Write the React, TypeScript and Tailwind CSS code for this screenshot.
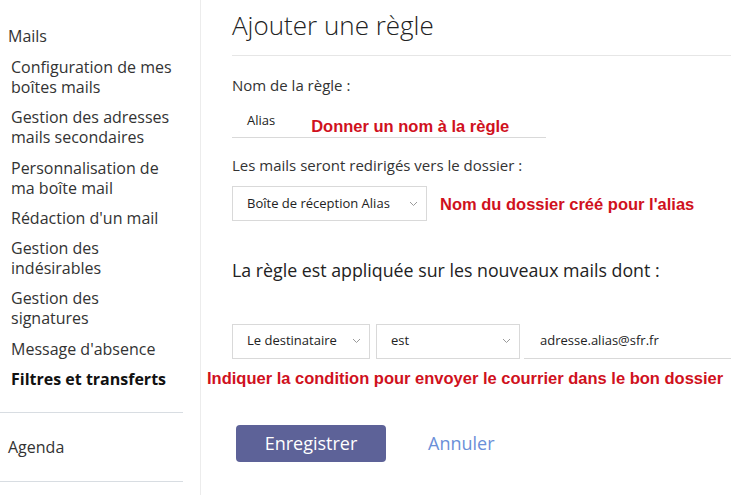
import React from "react";

const sidebarItems = [
  "Configuration de mes boîtes mails",
  "Gestion des adresses mails secondaires",
  "Personnalisation de ma boîte mail",
  "Rédaction d'un mail",
  "Gestion des indésirables",
  "Gestion des signatures",
  "Message d'absence",
];

const annotation = { fontFamily: "'Liberation Sans', Arial, sans-serif" };

function Chevron() {
  return (
    <svg width="9" height="6" viewBox="0 0 9 6" fill="none" className="shrink-0">
      <path d="M1 1l3.5 3.5L8 1" stroke="#9a9a9a" strokeWidth="1" />
    </svg>
  );
}

function Select({ label, width }: { label: string; width: string }) {
  return (
    <div
      className={`${width} h-[35px] border border-[#d9d9d9] bg-white flex items-center justify-between pl-[14px] pr-[8px] text-[13px] text-[#222]`}
    >
      <span>{label}</span>
      <Chevron />
    </div>
  );
}

export default function App() {
  return (
    <div
      className="flex w-[731px] h-[495px] bg-white overflow-hidden text-[#333]"
      style={{ fontFamily: "'Open Sans', 'Noto Sans', sans-serif" }}
    >
      {/* Sidebar */}
      <aside className="w-[201px] shrink-0 border-r border-[#ececec] flex flex-col">
        <div className="w-[183px] pt-[25px]">
          <div className="pl-[8px] text-[16px] leading-[22px] text-[#333]">Mails</div>
          <ul className="pl-[11px] pt-[10px] flex flex-col gap-[10.3px] text-[16px] leading-[20px] text-[#333]">
            {sidebarItems.map((item) => (
              <li key={item} className="w-[164px]">
                {item}
              </li>
            ))}
            <li className="font-bold text-[#111] whitespace-nowrap">Filtres et transferts</li>
          </ul>
          <div className="mt-[23px] border-t border-[#d8dde2]" />
          <div className="pl-[8px] h-[68px] flex items-center text-[16px] text-[#333]">Agenda</div>
          <div className="border-t border-[#d8dde2]" />
        </div>
      </aside>

      {/* Main */}
      <main className="flex-1 pl-[31px]">
        <h1 className="pt-[9px] text-[26px] leading-[32px] font-light text-[#222]">Ajouter une règle</h1>
        <div className="mt-[14px] border-t border-[#e6e6e6]" />

        <p className="mt-[20px] text-[15px] leading-[18px] text-[#333]">Nom de la règle :</p>
        <div className="mt-[10px] w-[314px] h-[34px] border-b border-[#d9d9d9] flex items-center">
          <span className="pl-[15px] text-[13px] text-[#222]">Alias</span>
          <span className="ml-[36px] mt-[12px] text-[16.5px] font-bold text-[#d0111d]" style={annotation}>
            Donner un nom à la règle
          </span>
        </div>

        <p className="mt-[18px] text-[15px] leading-[18px] text-[#333]">
          Les mails seront redirigés vers le dossier :
        </p>
        <div className="mt-[12px] flex items-center gap-[13px]">
          <Select label="Boîte de réception Alias" width="w-[195px]" />
          <span className="mt-[2px] text-[16.5px] font-bold text-[#d0111d]" style={annotation}>
            Nom du dossier créé pour l'alias
          </span>
        </div>

        <p className="mt-[38px] text-[17.8px] leading-[22px] text-[#222]">
          La règle est appliquée sur les nouveaux mails dont :
        </p>

        <div className="mt-[42px] flex items-center">
          <Select label="Le destinataire" width="w-[138px]" />
          <div className="ml-[6px]">
            <Select label="est" width="w-[144px]" />
          </div>
          <div className="ml-[4px] flex-1 h-[36px] border-b border-[#d9d9d9] flex items-center pl-[16px] text-[13px] text-[#222]">
            adresse.alias@sfr.fr
          </div>
        </div>
        <p
          className="-ml-[25px] mt-[10px] text-[16.5px] leading-[18px] font-bold text-[#d0111d] whitespace-nowrap"
          style={annotation}
        >
          Indiquer la condition pour envoyer le courrier dans le bon dossier
        </p>

        <div className="mt-[38px] flex items-center">
          <button className="ml-[4px] w-[150px] h-[37px] rounded-[4px] bg-[#5d6298] text-white text-[18px]">
            Enregistrer
          </button>
          <span className="ml-[42px] text-[18px] text-[#6b8fd8]">Annuler</span>
        </div>
      </main>
    </div>
  );
}
